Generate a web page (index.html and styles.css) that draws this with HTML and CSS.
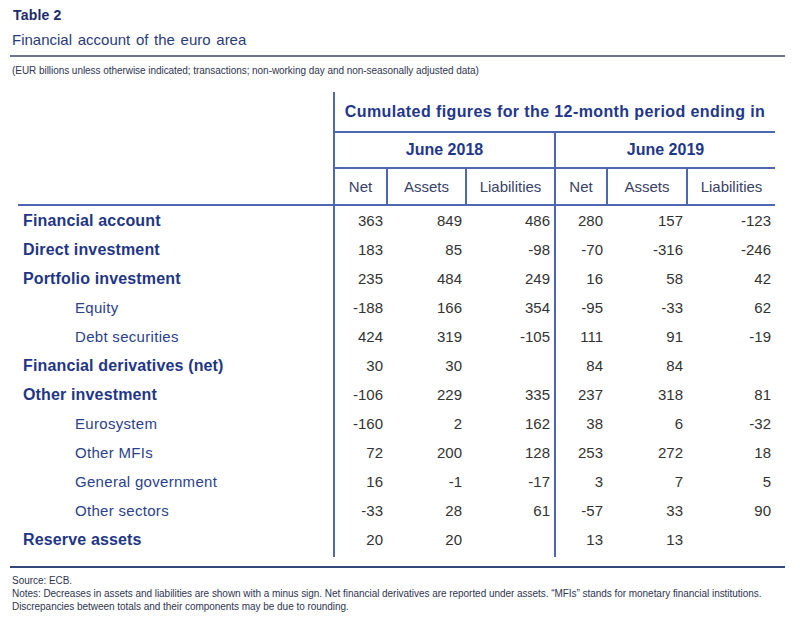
FILE: index.html
```html
<!DOCTYPE html>
<html>
<head>
<meta charset="utf-8">
<link rel="stylesheet" href="styles.css">
</head>
<body>
<div class="page">
  <div class="title">Table 2</div>
  <div class="subtitle">Financial account of the euro area</div>
  <div class="rule"></div>
  <div class="unit">(EUR billions unless otherwise indicated; transactions; non-working day and non-seasonally adjusted data)</div>

  <table class="fin">
    <colgroup>
      <col class="c-label">
      <col class="c-net">
      <col class="c-assets">
      <col class="c-liab">
      <col class="c-net2">
      <col class="c-assets2">
      <col class="c-liab2">
    </colgroup>
    <thead>
      <tr class="h1">
        <td class="blank" rowspan="3"></td>
        <th colspan="6" class="lb">Cumulated figures for the 12-month period ending in</th>
      </tr>
      <tr class="h2">
        <th colspan="3" class="lb">June 2018</th>
        <th colspan="3" class="lb">June 2019</th>
      </tr>
      <tr class="h3">
        <th class="lb">Net</th>
        <th class="lb">Assets</th>
        <th class="lb">Liabilities</th>
        <th class="lb">Net</th>
        <th class="lb">Assets</th>
        <th class="lb">Liabilities</th>
      </tr>
    </thead>
    <tbody>
      <tr class="main"><td class="lab">Financial account</td><td class="lb">363</td><td>849</td><td>486</td><td class="lb">280</td><td>157</td><td>-123</td></tr>
      <tr class="main"><td class="lab">Direct investment</td><td class="lb">183</td><td>85</td><td>-98</td><td class="lb">-70</td><td>-316</td><td>-246</td></tr>
      <tr class="main"><td class="lab">Portfolio investment</td><td class="lb">235</td><td>484</td><td>249</td><td class="lb">16</td><td>58</td><td>42</td></tr>
      <tr class="sub"><td class="lab">Equity</td><td class="lb">-188</td><td>166</td><td>354</td><td class="lb">-95</td><td>-33</td><td>62</td></tr>
      <tr class="sub"><td class="lab">Debt securities</td><td class="lb">424</td><td>319</td><td>-105</td><td class="lb">111</td><td>91</td><td>-19</td></tr>
      <tr class="main"><td class="lab">Financial derivatives (net)</td><td class="lb">30</td><td>30</td><td></td><td class="lb">84</td><td>84</td><td></td></tr>
      <tr class="main"><td class="lab">Other investment</td><td class="lb">-106</td><td>229</td><td>335</td><td class="lb">237</td><td>318</td><td>81</td></tr>
      <tr class="sub"><td class="lab">Eurosystem</td><td class="lb">-160</td><td>2</td><td>162</td><td class="lb">38</td><td>6</td><td>-32</td></tr>
      <tr class="sub"><td class="lab">Other MFIs</td><td class="lb">72</td><td>200</td><td>128</td><td class="lb">253</td><td>272</td><td>18</td></tr>
      <tr class="sub"><td class="lab">General government</td><td class="lb">16</td><td>-1</td><td>-17</td><td class="lb">3</td><td>7</td><td>5</td></tr>
      <tr class="sub"><td class="lab">Other sectors</td><td class="lb">-33</td><td>28</td><td>61</td><td class="lb">-57</td><td>33</td><td>90</td></tr>
      <tr class="main last"><td class="lab">Reserve assets</td><td class="lb">20</td><td>20</td><td></td><td class="lb">13</td><td>13</td><td></td></tr>
    </tbody>
  </table>

  <div class="rule2"></div>
  <div class="notes">
    <p>Source: ECB.</p>
    <p>Notes: Decreases in assets and liabilities are shown with a minus sign. Net financial derivatives are reported under assets. “MFIs” stands for monetary financial institutions.</p>
    <p>Discrepancies between totals and their components may be due to rounding.</p>
  </div>
</div>
</body>
</html>
```

FILE: styles.css
```css
html, body {
  margin: 0;
  padding: 0;
  background: #ffffff;
}

body {
  font-family: "Liberation Sans", Arial, sans-serif;
  width: 800px;
  height: 619px;
  overflow: hidden;
}

.page {
  padding: 6px 15px 0 10px;
}

.title {
  font-weight: bold;
  font-size: 14px;
  line-height: 18px;
  color: #1b2b6b;
  padding-left: 3px;
  letter-spacing: 0.2px;
}

.subtitle {
  font-size: 15px;
  line-height: 18px;
  margin-top: 7px;
  color: #2a3c78;
  padding-left: 2px;
  word-spacing: 1.5px;
}

.rule {
  height: 2px;
  background: #6b7688;
  margin-top: 6px;
}

.unit {
  font-size: 10px;
  line-height: 12px;
  margin-top: 8px;
  padding-left: 2px;
  color: #2f3550;
  letter-spacing: -0.05px;
}

.fin {
  border-collapse: collapse;
  margin-top: 15px;
  margin-left: 8px;
  table-layout: fixed;
  width: 757px;
  color: #333333;
}

.c-label { width: 316px; }
.c-net { width: 53px; }
.c-assets { width: 79px; }
.c-liab { width: 89px; }
.c-net2 { width: 52px; }
.c-assets2 { width: 80px; }
.c-liab2 { width: 88px; }

.fin th, .fin td {
  padding: 0;
}

.fin th {
  font-weight: normal;
}

.lb {
  border-left: 2px solid #4d67b0;
}

.fin thead tr {
  border-bottom: 2px solid #4d67b0;
}

.blank {
  border-bottom: 2px solid #4d67b0;
}

.h1 th {
  height: 39px;
  font-weight: bold;
  font-size: 16px;
  color: #23378a;
  letter-spacing: 0.4px;
  text-align: center;
}

.h2 th {
  height: 34px;
  font-weight: bold;
  font-size: 16px;
  color: #23378a;
  text-align: center;
}

.h3 th {
  height: 35px;
  font-size: 15px;
  color: #3a4266;
  text-align: center;
}

.fin tbody td {
  height: 29px;
  font-size: 15px;
  text-align: right;
  padding-right: 4px;
  vertical-align: middle;
}

.fin tbody tr.last td {
  height: 32px;
  vertical-align: top;
  padding-top: 6px;
  box-sizing: border-box;
}

.fin tbody td.lab {
  text-align: left;
  padding-right: 0;
}

.main td.lab {
  font-size: 16px;
  font-weight: bold;
  color: #1f3686;
  padding-left: 5px;
  letter-spacing: 0.15px;
}

.sub td.lab {
  color: #2b3f8c;
  padding-left: 57px;
  letter-spacing: 0.3px;
}

.rule2 {
  height: 2px;
  background: #34477a;
  margin-top: 9px;
}

.notes {
  margin-top: 6px;
  padding-left: 2px;
  font-size: 10px;
  line-height: 13px;
  color: #2f3550;
  letter-spacing: -0.04px;
}

.notes p {
  margin: 0;
}
```
